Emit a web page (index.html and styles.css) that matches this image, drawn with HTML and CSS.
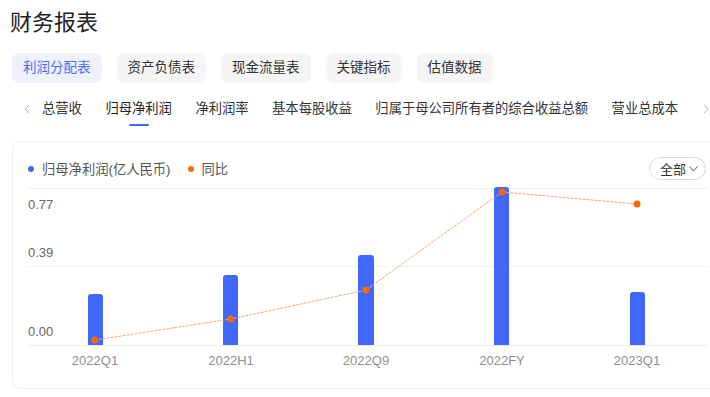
FILE: index.html
```html
<!DOCTYPE html>
<html lang="zh">
<head>
    <meta charset="UTF-8">
    <link rel="stylesheet" href="styles.css">
    <title>财务报表</title>
</head>
<body>
    <h1 class="title">财务报表</h1>

    <div class="pills">
        <span class="pill active">利润分配表</span>
        <span class="pill">资产负债表</span>
        <span class="pill">现金流量表</span>
        <span class="pill">关键指标</span>
        <span class="pill">估值数据</span>
    </div>

    <div class="tabs">
        <svg class="arrow" width="6" height="10" viewBox="0 0 6 10"><polyline points="5,1 1,5 5,9" fill="none" stroke="#bbb" stroke-width="1"/></svg>
        <span class="tab">总营收</span>
        <span class="tab active">归母净利润</span>
        <span class="tab">净利润率</span>
        <span class="tab">基本每股收益</span>
        <span class="tab">归属于母公司所有者的综合收益总额</span>
        <span class="tab">营业总成本</span>
        <svg class="arrow right" width="6" height="10" viewBox="0 0 6 10"><polyline points="1,1 5,5 1,9" fill="none" stroke="#bbb" stroke-width="1"/></svg>
    </div>

    <div class="card">
        <div class="legend-row">
            <div class="legend">
                <span class="dot blue"></span><span class="label">归母净利润(亿人民币)</span>
                <span class="dot orange"></span><span class="label">同比</span>
            </div>
            <div class="select">全部
                <svg width="9" height="6" viewBox="0 0 9 6"><polyline points="0.5,0.5 4.5,5 8.5,0.5" fill="none" stroke="#555" stroke-width="1"/></svg>
            </div>
        </div>

        <svg class="chart" width="702" height="208" viewBox="0 0 702 208">
            <line x1="15" y1="8.5" x2="695" y2="8.5" stroke="#f2f2f2"/>
            <line x1="15" y1="86.5" x2="695" y2="86.5" stroke="#f2f2f2"/>
            <line x1="15" y1="165.5" x2="695" y2="165.5" stroke="#ececec"/>

            <text class="ylab" x="15" y="29">0.77</text>
            <text class="ylab" x="15" y="77">0.39</text>
            <text class="ylab" x="15" y="156">0.00</text>

            <path class="bar" d="M75,165 V117 a3,3 0 0 1 3,-3 h9 a3,3 0 0 1 3,3 V165 Z"/>
            <path class="bar" d="M210,165 V98 a3,3 0 0 1 3,-3 h9 a3,3 0 0 1 3,3 V165 Z"/>
            <path class="bar" d="M345,165 V78 a3,3 0 0 1 3,-3 h10 a3,3 0 0 1 3,3 V165 Z"/>
            <path class="bar" d="M481,165 V10 a3,3 0 0 1 3,-3 h9 a3,3 0 0 1 3,3 V165 Z"/>
            <path class="bar" d="M617,165 V115 a3,3 0 0 1 3,-3 h9 a3,3 0 0 1 3,3 V165 Z"/>

            <polyline class="line" points="82,160 218,139 353,110 489,12 624,24"/>
            <circle class="pt" cx="82" cy="160" r="3.5"/>
            <circle class="pt" cx="218" cy="139" r="3.5"/>
            <circle class="pt" cx="353" cy="110" r="3.5"/>
            <circle class="pt" cx="489" cy="12" r="3.5"/>
            <circle class="pt" cx="624" cy="24" r="3.5"/>

            <text class="xlab" x="82" y="185">2022Q1</text>
            <text class="xlab" x="218" y="185">2022H1</text>
            <text class="xlab" x="353" y="185">2022Q9</text>
            <text class="xlab" x="489" y="185">2022FY</text>
            <text class="xlab" x="624" y="185">2023Q1</text>
        </svg>
    </div>
</body>
</html>
```

FILE: styles.css
```css
body {
    margin: 0;
    overflow: hidden;
    background-color: #fff;
    font-family: "Liberation Sans", "Noto Sans CJK SC", sans-serif;
    color: #333;
}
.title {
    margin: 0;
    padding: 8px 0 0 10px;
    font-size: 22px;
    line-height: 30px;
    font-weight: normal;
    color: #222;
}
.pills {
    display: flex;
    gap: 15px;
    margin: 15px 0 0 12px;
}
.pill {
    height: 30px;
    line-height: 30px;
    padding: 0 11px;
    font-size: 13.5px;
    border-radius: 8px;
    background-color: #f5f5f5;
    color: #333;
}
.pill.active {
    background-color: #eef1fe;
    color: #4b6ef5;
}
.tabs {
    display: flex;
    align-items: flex-start;
    gap: 23.5px;
    margin: 16px 0 0 24px;
    white-space: nowrap;
}
.arrow {
    margin-top: 5px;
    margin-right: -11.5px;
}
.arrow.right {
    margin-left: 1px;
    margin-right: 0;
}
.tab {
    display: flex;
    flex-direction: column;
    align-items: center;
    font-size: 13.3px;
    line-height: 20px;
    color: #333;
}
.tab::after {
    content: "";
    display: block;
    width: 20px;
    height: 2px;
    margin-top: 5px;
    border-radius: 1px;
}
.tab.active {
    color: #222;
}
.tab.active::after {
    background-color: #3d6bf5;
}
.card {
    margin: 15px 0 0 12px;
    width: 704px;
    border: 1px solid #f0f0f0;
    border-radius: 8px;
}
.legend-row {
    display: flex;
    justify-content: space-between;
    align-items: center;
    padding: 15px 11px 0 15px;
    height: 23px;
}
.legend {
    display: flex;
    align-items: center;
    font-size: 13.3px;
    color: #555;
}
.dot {
    width: 6px;
    height: 6px;
    border-radius: 50%;
    margin-right: 8px;
}
.dot.blue {
    background-color: #3d6bfa;
}
.dot.orange {
    background-color: #ff6a00;
    margin-left: 17px;
}
.select {
    display: flex;
    align-items: center;
    gap: 3px;
    height: 21px;
    padding: 0 7px 0 10px;
    border: 1px solid #d9d9d9;
    border-radius: 12px;
    font-size: 13px;
    color: #333;
}
.chart {
    display: block;
}
.ylab {
    font-size: 13px;
    fill: #666;
}
.xlab {
    font-size: 13px;
    fill: #8f8f8f;
    text-anchor: middle;
}
.bar {
    fill: #4068fa;
}
.line {
    fill: none;
    stroke: #fca877;
    stroke-width: 1;
    stroke-dasharray: 3 1;
}
.pt {
    fill: #ff6600;
}
```
